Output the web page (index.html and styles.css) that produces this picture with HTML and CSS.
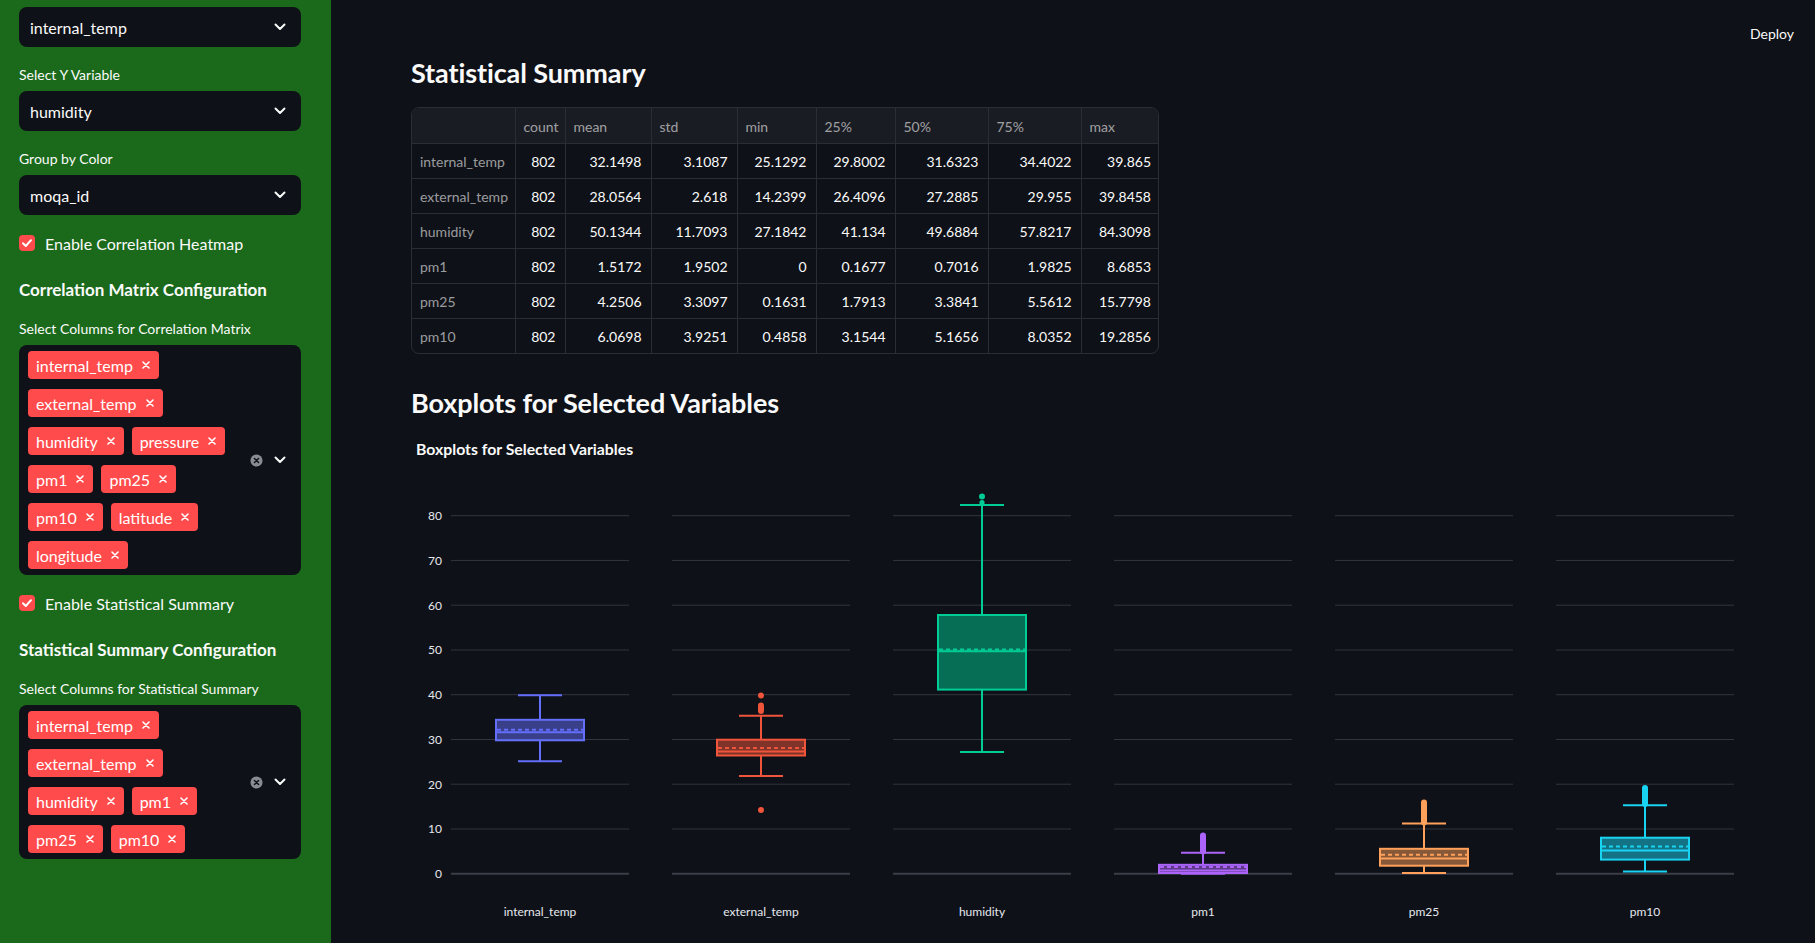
FILE: index.html
```html
<!DOCTYPE html>
<html lang="en">
<head>
<meta charset="utf-8">
<title>Dashboard</title>
<link rel="stylesheet" href="styles.css">
</head>
<body>
<div class="app">
  <aside class="sidebar">
    <div class="select"><span>internal_temp</span><svg class="chev" viewBox="0 0 12 8"><path d="M1.5 1.5 L6 6 L10.5 1.5"/></svg></div>
    <div class="label">Select Y Variable</div>
    <div class="select"><span>humidity</span><svg class="chev" viewBox="0 0 12 8"><path d="M1.5 1.5 L6 6 L10.5 1.5"/></svg></div>
    <div class="label">Group by Color</div>
    <div class="select"><span>moqa_id</span><svg class="chev" viewBox="0 0 12 8"><path d="M1.5 1.5 L6 6 L10.5 1.5"/></svg></div>
    <div class="check"><span class="box"><svg viewBox="0 0 16 16"><path d="M4 8.2 L6.8 11 L12 5.2"/></svg></span>Enable Correlation Heatmap</div>
    <h3 class="side-h">Correlation Matrix Configuration</h3>
    <div class="label">Select Columns for Correlation Matrix</div>
    <div class="multi">
      <div class="tags">
        <span class="tag">internal_temp<svg viewBox="0 0 8 8"><path d="M1 1 L7 7 M7 1 L1 7"/></svg></span>
        <span class="tag">external_temp<svg viewBox="0 0 8 8"><path d="M1 1 L7 7 M7 1 L1 7"/></svg></span>
        <span class="tag">humidity<svg viewBox="0 0 8 8"><path d="M1 1 L7 7 M7 1 L1 7"/></svg></span>
        <span class="tag">pressure<svg viewBox="0 0 8 8"><path d="M1 1 L7 7 M7 1 L1 7"/></svg></span>
        <span class="tag">pm1<svg viewBox="0 0 8 8"><path d="M1 1 L7 7 M7 1 L1 7"/></svg></span>
        <span class="tag">pm25<svg viewBox="0 0 8 8"><path d="M1 1 L7 7 M7 1 L1 7"/></svg></span>
        <span class="tag">pm10<svg viewBox="0 0 8 8"><path d="M1 1 L7 7 M7 1 L1 7"/></svg></span>
        <span class="tag">latitude<svg viewBox="0 0 8 8"><path d="M1 1 L7 7 M7 1 L1 7"/></svg></span>
        <span class="tag">longitude<svg viewBox="0 0 8 8"><path d="M1 1 L7 7 M7 1 L1 7"/></svg></span>
      </div>
      <div class="icons">
        <svg class="clear" viewBox="0 0 14 14"><circle cx="7" cy="7" r="6.5"/><path d="M4.8 4.8 L9.2 9.2 M9.2 4.8 L4.8 9.2"/></svg>
        <svg class="chev" viewBox="0 0 12 8"><path d="M1.5 1.5 L6 6 L10.5 1.5"/></svg>
      </div>
    </div>
    <div class="check"><span class="box"><svg viewBox="0 0 16 16"><path d="M4 8.2 L6.8 11 L12 5.2"/></svg></span>Enable Statistical Summary</div>
    <h3 class="side-h">Statistical Summary Configuration</h3>
    <div class="label">Select Columns for Statistical Summary</div>
    <div class="multi">
      <div class="tags">
        <span class="tag">internal_temp<svg viewBox="0 0 8 8"><path d="M1 1 L7 7 M7 1 L1 7"/></svg></span>
        <span class="tag">external_temp<svg viewBox="0 0 8 8"><path d="M1 1 L7 7 M7 1 L1 7"/></svg></span>
        <span class="tag">humidity<svg viewBox="0 0 8 8"><path d="M1 1 L7 7 M7 1 L1 7"/></svg></span>
        <span class="tag">pm1<svg viewBox="0 0 8 8"><path d="M1 1 L7 7 M7 1 L1 7"/></svg></span>
        <span class="tag">pm25<svg viewBox="0 0 8 8"><path d="M1 1 L7 7 M7 1 L1 7"/></svg></span>
        <span class="tag">pm10<svg viewBox="0 0 8 8"><path d="M1 1 L7 7 M7 1 L1 7"/></svg></span>
      </div>
      <div class="icons">
        <svg class="clear" viewBox="0 0 14 14"><circle cx="7" cy="7" r="6.5"/><path d="M4.8 4.8 L9.2 9.2 M9.2 4.8 L4.8 9.2"/></svg>
        <svg class="chev" viewBox="0 0 12 8"><path d="M1.5 1.5 L6 6 L10.5 1.5"/></svg>
      </div>
    </div>
  </aside>

  <main class="main">
    <header class="topbar"><span class="deploy">Deploy</span></header>
    <section class="content">
      <h2 class="title">Statistical Summary</h2>
      <div class="table-wrap">
        <table class="stats">
          <colgroup>
            <col style="width:103px"><col style="width:50px"><col style="width:86px"><col style="width:86px"><col style="width:79px"><col style="width:79px"><col style="width:93px"><col style="width:93px"><col style="width:79px">
          </colgroup>
          <thead>
            <tr><th></th><th>count</th><th>mean</th><th>std</th><th>min</th><th>25%</th><th>50%</th><th>75%</th><th>max</th></tr>
          </thead>
          <tbody>
            <tr><th>internal_temp</th><td>802</td><td>32.1498</td><td>3.1087</td><td>25.1292</td><td>29.8002</td><td>31.6323</td><td>34.4022</td><td>39.865</td></tr>
            <tr><th>external_temp</th><td>802</td><td>28.0564</td><td>2.618</td><td>14.2399</td><td>26.4096</td><td>27.2885</td><td>29.955</td><td>39.8458</td></tr>
            <tr><th>humidity</th><td>802</td><td>50.1344</td><td>11.7093</td><td>27.1842</td><td>41.134</td><td>49.6884</td><td>57.8217</td><td>84.3098</td></tr>
            <tr><th>pm1</th><td>802</td><td>1.5172</td><td>1.9502</td><td>0</td><td>0.1677</td><td>0.7016</td><td>1.9825</td><td>8.6853</td></tr>
            <tr><th>pm25</th><td>802</td><td>4.2506</td><td>3.3097</td><td>0.1631</td><td>1.7913</td><td>3.3841</td><td>5.5612</td><td>15.7798</td></tr>
            <tr><th>pm10</th><td>802</td><td>6.0698</td><td>3.9251</td><td>0.4858</td><td>3.1544</td><td>5.1656</td><td>8.0352</td><td>19.2856</td></tr>
          </tbody>
        </table>
      </div>

      <h2 class="title title-2">Boxplots for Selected Variables</h2>
      <svg class="chart" viewBox="0 0 1324 513" width="1324" height="513">
        <defs>
          <g id="grid" stroke="#33353e" stroke-width="1">
            <line x1="0" x2="178" y1="85.7" y2="85.7"/>
            <line x1="0" x2="178" y1="130.45" y2="130.45"/>
            <line x1="0" x2="178" y1="175.2" y2="175.2"/>
            <line x1="0" x2="178" y1="220" y2="220"/>
            <line x1="0" x2="178" y1="264.7" y2="264.7"/>
            <line x1="0" x2="178" y1="309.5" y2="309.5"/>
            <line x1="0" x2="178" y1="354.2" y2="354.2"/>
            <line x1="0" x2="178" y1="399" y2="399"/>
            <line x1="0" x2="178" y1="443.7" y2="443.7" stroke="#3b3e47" stroke-width="2"/>
          </g>
        </defs>
        <text class="ctitle" x="5" y="25">Boxplots for Selected Variables</text>
        <g class="gridlines">
          <use href="#grid" x="40"/>
          <use href="#grid" x="261"/>
          <use href="#grid" x="482"/>
          <use href="#grid" x="703"/>
          <use href="#grid" x="924"/>
          <use href="#grid" x="1145"/>
        </g>
        <g class="yticks">
          <text x="31" y="90">80</text>
          <text x="31" y="134.8">70</text>
          <text x="31" y="179.6">60</text>
          <text x="31" y="224.4">50</text>
          <text x="31" y="269.1">40</text>
          <text x="31" y="313.9">30</text>
          <text x="31" y="358.6">20</text>
          <text x="31" y="403.4">10</text>
          <text x="31" y="448.1">0</text>
        </g>

        <!-- internal_temp -->
        <g class="bx" stroke="#636efa" fill="#636efa">
          <line x1="129" x2="129" y1="265.3" y2="289.8"/>
          <line x1="129" x2="129" y1="310.3" y2="331.2"/>
          <line x1="107" x2="151" y1="265.3" y2="265.3"/>
          <line x1="107" x2="151" y1="331.2" y2="331.2"/>
          <rect x="85" y="289.8" width="88" height="20.5" fill-opacity="0.5"/>
          <line x1="86" x2="172" y1="302.2" y2="302.2"/>
          <line class="mean" x1="86" x2="172" y1="299.8" y2="299.8"/>
        </g>
        <!-- external_temp -->
        <g class="bx" stroke="#ef553b" fill="#ef553b">
          <line x1="350" x2="350" y1="285.7" y2="309.7"/>
          <line x1="350" x2="350" y1="325.5" y2="346.1"/>
          <line x1="328" x2="372" y1="285.7" y2="285.7"/>
          <line x1="328" x2="372" y1="346.1" y2="346.1"/>
          <rect x="306" y="309.7" width="88" height="15.8" fill-opacity="0.5"/>
          <line x1="307" x2="393" y1="321.6" y2="321.6"/>
          <line class="mean" x1="307" x2="393" y1="318.1" y2="318.1"/>
          <circle cx="350" cy="265.6" r="3" stroke="none"/>
          <line class="fat" x1="350" x2="350" y1="275.5" y2="281"/>
          <circle cx="350" cy="380" r="3" stroke="none"/>
        </g>
        <!-- humidity -->
        <g class="bx" stroke="#00cc96" fill="#00cc96">
          <line x1="571" x2="571" y1="75" y2="185"/>
          <line x1="571" x2="571" y1="259.6" y2="322.1"/>
          <line x1="549" x2="593" y1="75" y2="75"/>
          <line x1="549" x2="593" y1="322.1" y2="322.1"/>
          <rect x="527" y="185" width="88" height="74.6" fill-opacity="0.5"/>
          <line x1="528" x2="614" y1="221.3" y2="221.3"/>
          <line class="mean" x1="528" x2="614" y1="219.4" y2="219.4"/>
          <circle cx="571" cy="66.4" r="3" stroke="none"/>
          <circle cx="571" cy="72.6" r="2.6" stroke="none"/>
        </g>
        <!-- pm1 -->
        <g class="bx" stroke="#ab63fa" fill="#ab63fa">
          <line x1="792" x2="792" y1="422.8" y2="434.8"/>
          <line x1="770" x2="814" y1="422.8" y2="422.8"/>
          <line x1="770" x2="814" y1="443.7" y2="443.7"/>
          <rect x="748" y="434.8" width="88" height="8.2" fill-opacity="0.5"/>
          <line x1="749" x2="835" y1="440.6" y2="440.6"/>
          <line class="mean" x1="749" x2="835" y1="437" y2="437"/>
          <line class="fat" x1="792" x2="792" y1="405.5" y2="421.5"/>
        </g>
        <!-- pm25 -->
        <g class="bx" stroke="#ffa15a" fill="#ffa15a">
          <line x1="1013" x2="1013" y1="393.6" y2="418.8"/>
          <line x1="1013" x2="1013" y1="435.7" y2="443"/>
          <line x1="991" x2="1035" y1="393.6" y2="393.6"/>
          <line x1="991" x2="1035" y1="443" y2="443"/>
          <rect x="969" y="418.8" width="88" height="16.9" fill-opacity="0.5"/>
          <line x1="970" x2="1056" y1="428.6" y2="428.6"/>
          <line class="mean" x1="970" x2="1056" y1="424.7" y2="424.7"/>
          <line class="fat" x1="1013" x2="1013" y1="372.5" y2="392.5"/>
        </g>
        <!-- pm10 -->
        <g class="bx" stroke="#19d3f3" fill="#19d3f3">
          <line x1="1234" x2="1234" y1="375.2" y2="407.7"/>
          <line x1="1234" x2="1234" y1="429.6" y2="441.5"/>
          <line x1="1212" x2="1256" y1="375.2" y2="375.2"/>
          <line x1="1212" x2="1256" y1="441.5" y2="441.5"/>
          <rect x="1190" y="407.7" width="88" height="21.9" fill-opacity="0.5"/>
          <line x1="1191" x2="1277" y1="420.6" y2="420.6"/>
          <line class="mean" x1="1191" x2="1277" y1="416.5" y2="416.5"/>
          <line class="fat" x1="1234" x2="1234" y1="358" y2="374"/>
        </g>

        <g class="xticks">
          <text x="129" y="486">internal_temp</text>
          <text x="350" y="486">external_temp</text>
          <text x="571" y="486">humidity</text>
          <text x="792" y="486">pm1</text>
          <text x="1013" y="486">pm25</text>
          <text x="1234" y="486">pm10</text>
        </g>
      </svg>
    </section>
  </main>
</div>
</body>
</html>
```

FILE: styles.css
```css
* { box-sizing: border-box; }

html, body {
  margin: 0;
  padding: 0;
  width: 1815px;
  height: 943px;
  overflow: hidden;
  background: #0e1117;
  color: #fafafa;
  font-family: Lato, "Source Sans Pro", "Noto Sans", sans-serif;
}

.app {
  display: flex;
  height: 943px;
}

/* ---------- Sidebar ---------- */
.sidebar {
  flex: 0 0 331px;
  background: #1b6a1b;
  padding: 7px 30px 0 19px;
  display: flex;
  flex-direction: column;
  gap: 16px;
}

.select {
  height: 40px;
  background: #0e1117;
  border-radius: 8px;
  display: flex;
  align-items: center;
  justify-content: space-between;
  padding: 0 15px 0 11px;
  font-size: 16px;
}

.chev {
  width: 12px;
  height: 8px;
  fill: none;
  stroke: #fafafa;
  stroke-width: 2;
  stroke-linecap: round;
  stroke-linejoin: round;
}

.label {
  font-size: 14px;
  line-height: 24px;
  height: 28px;
  margin-bottom: -16px;
  padding-bottom: 4px;
  white-space: nowrap;
}

.check {
  display: flex;
  align-items: center;
  height: 24px;
  font-size: 16px;
  gap: 10px;
}
.check .box {
  width: 16px;
  height: 16px;
  border-radius: 4px;
  background: #ff4b4b;
  display: flex;
}
.check .box svg {
  width: 16px;
  height: 16px;
  fill: none;
  stroke: #fff;
  stroke-width: 2;
  stroke-linecap: round;
  stroke-linejoin: round;
}

.side-h {
  margin: 0;
  height: 30px;
  padding-top: 7px;
  font-size: 17px;
  line-height: 23px;
  font-weight: 700;
  white-space: nowrap;
}

.multi {
  background: #0e1117;
  border-radius: 8px;
  display: flex;
  align-items: center;
  justify-content: space-between;
  padding: 6px 15px 6px 9px;
}
.tags {
  width: 212px;
  display: flex;
  flex-wrap: wrap;
  gap: 10px 8px;
}
.tag {
  height: 28px;
  background: #ff4b4b;
  border-radius: 4px;
  display: inline-flex;
  align-items: center;
  gap: 9px;
  padding: 0 9px 0 8px;
  font-size: 16px;
  color: #fff;
}
.tag svg {
  width: 8px;
  height: 8px;
  fill: none;
  stroke: #fff;
  stroke-width: 1.6;
  stroke-linecap: round;
}
.icons {
  display: flex;
  align-items: center;
  gap: 11px;
}
.clear {
  width: 13px;
  height: 13px;
}
.clear circle { fill: #8a8c94; }
.clear path {
  stroke: #0e1117;
  stroke-width: 1.6;
  stroke-linecap: round;
}

/* ---------- Main ---------- */
.main {
  flex: 1;
  display: flex;
  flex-direction: column;
  background: #0e1117;
}

.topbar {
  height: 57px;
  display: flex;
  justify-content: flex-end;
  align-items: flex-start;
  padding: 24px 21px 0 0;
}
.deploy {
  font-size: 14px;
  line-height: 20px;
  color: #fafafa;
}

.content {
  padding: 0 80px;
}

.title {
  margin: 0;
  font-size: 27px;
  line-height: 34px;
  font-weight: 700;
  color: #fafafa;
  letter-spacing: -0.1px;
}
.title-2 { margin-top: 32px; }

.table-wrap {
  margin-top: 17px;
  width: 748px;
  border: 1px solid #2a2d35;
  border-radius: 8px;
  overflow: hidden;
}
.stats {
  border-collapse: collapse;
  table-layout: fixed;
  width: 746px;
  font-size: 14px;
}
.stats thead th {
  background: #1a1c23;
  height: 35px;
  text-align: left;
  font-weight: 400;
  color: rgba(250, 250, 250, 0.6);
  padding: 2px 8px 0;
  border-right: 1px solid #2a2d35;
  border-bottom: 1px solid #2a2d35;
}
.stats tbody th {
  text-align: left;
  font-weight: 400;
  color: rgba(250, 250, 250, 0.6);
  padding: 1px 8px 0;
  height: 35px;
  border-right: 1px solid #2a2d35;
  border-bottom: 1px solid #2a2d35;
  white-space: nowrap;
}
.stats td {
  text-align: right;
  padding: 1px 9px 0 4px;
  height: 35px;
  color: #fafafa;
  border-right: 1px solid #2a2d35;
  border-bottom: 1px solid #2a2d35;
}
.stats tr > :last-child { border-right: none; }
.stats tbody tr:last-child > * { border-bottom: none; }

.chart {
  display: block;
  margin-top: 10px;
  overflow: visible;
}
.ctitle {
  font-size: 15.8px;
  font-weight: 700;
  fill: #fafafa;
}
.yticks text {
  font-size: 12px;
  fill: #e6e8ee;
  text-anchor: end;
}
.xticks text {
  font-size: 12px;
  fill: #e6e8ee;
  text-anchor: middle;
}
.bx line, .bx rect {
  stroke-width: 2;
}
.bx line.mean {
  stroke-dasharray: 4 3;
}
.bx line.fat {
  stroke-width: 6;
  stroke-linecap: round;
}
```
